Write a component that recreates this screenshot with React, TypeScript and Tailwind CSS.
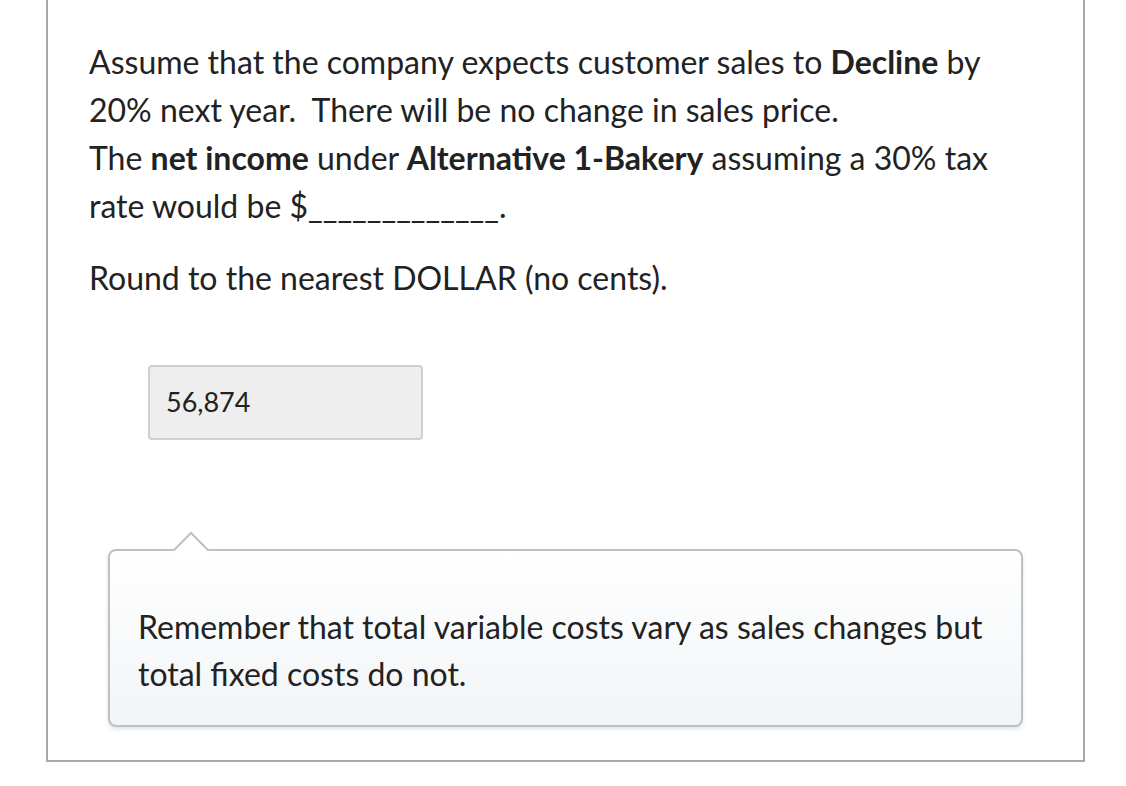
export default function App() {
  return (
    <div className="min-h-[786px] bg-white font-['Lato',sans-serif] text-[#222]">
      <div className="ml-[46px] w-[1039px] h-[762px] border-x-2 border-b-2 border-[#a9a9a9] pl-[41px] pr-[40px] pt-[38px]">
        <p className="text-[32px] leading-[48px]">
          Assume that the company expects customer sales to <b className="font-bold">Decline</b> by 20% next year.&nbsp; There will be no change in sales price.
          <br />
          The <b className="font-bold">net income</b> under <b className="font-bold">Alternative 1-Bakery</b> assuming a 30% tax rate would be $_____________.
        </p>
        <p className="mt-[24px] text-[32px] leading-[48px]">Round to the nearest DOLLAR (no cents).</p>

        <div className="ml-[59px] mt-[63px] w-[275px] h-[75px] rounded-[4px] border-2 border-[#cfcfcf] bg-[#eeeeee] pl-[16px] flex items-center text-[27px]">
          56,874
        </div>

        <div className="relative ml-[19px] mt-[109px] w-[915px] rounded-[8px] border-2 border-[#b9c1c9] bg-gradient-to-b from-white to-[#f2f4f6] pl-[28px] pr-[24px] pt-[52px] pb-[28px] shadow-[0_2px_4px_rgba(0,0,0,0.12)]">
          <div className="absolute -top-[14px] left-[68px] w-[26px] h-[26px] rotate-45 border-l-2 border-t-2 border-[#b9c1c9] bg-white" />
          <p className="relative text-[32px] leading-[47px]">
            Remember that total variable costs vary as sales changes but total fixed costs do not.
          </p>
        </div>
      </div>
    </div>
  )
}
